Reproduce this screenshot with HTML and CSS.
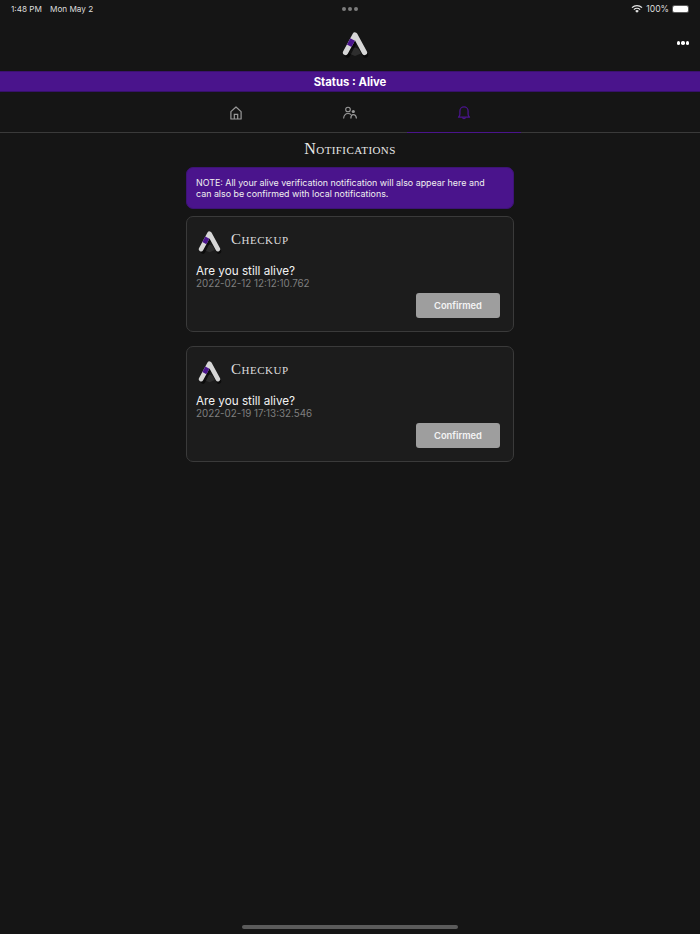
FILE: index.html
```html
<!DOCTYPE html>
<html lang="en">
<head>
<meta charset="utf-8">
<title>Notifications</title>
<link rel="stylesheet" href="styles.css">
</head>
<body>
<div class="page">
  <div class="statusbar">
    <div class="sb-left"><span>1:48 PM</span><span>Mon May 2</span></div>
    <div class="sb-dots"><i></i><i></i><i></i></div>
    <div class="sb-right">
      <svg class="wifi" width="12" height="9" viewBox="0 0 12 9"><path d="M6 8.8 4.2 6.900a2.600 2.600 0 0 1 3.600 0Z" fill="#e8e8e8"/><path d="M2.900 5.600a4.500 4.500 0 0 1 6.200 0" fill="none" stroke="#e8e8e8" stroke-width="1.300"/><path d="M1 3.600a7.200 7.200 0 0 1 10 0" fill="none" stroke="#e8e8e8" stroke-width="1.300"/></svg>
      <span>100%</span>
      <span class="battery"><span class="battery-fill"></span></span>
    </div>
  </div>
  <header class="topbar">
    <svg class="logo" width="30" height="26" viewBox="0 0 30 26"><use href="#logo-mark"/></svg>
    <div class="more"><i></i><i></i><i></i></div>
  </header>
  <div class="status">Status : Alive</div>
  <nav class="tabs">
    <div class="tab">
      <svg width="14" height="14" viewBox="0 0 14 14" fill="none" stroke="#9a9a9a" stroke-width="1.200"><path d="M1.900 13V5.600L7 1l5.100 4.600V13Z" stroke-linejoin="round"/><path d="M5.300 13V8.300h3.400V13"/></svg>
    </div>
    <div class="tab">
      <svg width="14" height="14" viewBox="0 0 14 14" fill="none" stroke="#9a9a9a" stroke-width="1.100"><circle cx="5" cy="3.500" r="2.300"/><path d="M.6 12.500c.3-3.300 2-5 4.400-5 1.300 0 2.300.4 3 1.200"/><circle cx="10.300" cy="5.500" r="1.600" fill="#9a9a9a" stroke="none"/><path d="M7.900 12.500c0-2.300 1-3.800 2.400-3.800s2.900 1.500 3.100 3.800" stroke-width="1.300"/></svg>
    </div>
    <div class="tab tab-active">
      <svg width="14" height="14" viewBox="0 0 14 14" fill="none" stroke="#4a148c" stroke-width="1.300"><path d="M1.500 11.200c.9-.9 1.400-1.500 1.400-3V5a4.100 4.100 0 0 1 8.200 0v3.200c0 1.500.5 2.100 1.400 3Z" stroke-linejoin="round"/><path d="M5.400 11.400a1.700 1.700 0 0 0 3.200 0"/></svg>
    </div>
  </nav>
  <main class="content">
    <h1 class="title">Notifications</h1>
    <div class="note">NOTE: All your alive verification notification will also appear here and can also be confirmed with local notifications.</div>
    <article class="card">
      <div class="card-head">
        <svg class="logo" width="27" height="23" viewBox="0 0 30 26"><use href="#logo-mark"/></svg>
        <span class="card-title">Checkup</span>
      </div>
      <div class="question">Are you still alive?</div>
      <div class="stamp">2022-02-12 12:12:10.762</div>
      <div class="actions"><button class="confirmed" type="button">Confirmed</button></div>
    </article>
    <article class="card">
      <div class="card-head">
        <svg class="logo" width="27" height="23" viewBox="0 0 30 26"><use href="#logo-mark"/></svg>
        <span class="card-title">Checkup</span>
      </div>
      <div class="question">Are you still alive?</div>
      <div class="stamp">2022-02-19 17:13:32.546</div>
      <div class="actions"><button class="confirmed" type="button">Confirmed</button></div>
    </article>
  </main>
  <div class="home-indicator"></div>
</div>
<svg class="defs" width="0" height="0" aria-hidden="true">
  <defs>
    <g id="logo-mark">
      <path d="M9 21.500C10.500 17.500 12.500 15.500 15 15.500s4.500 2 6 6l-6 2.500Z" fill="#2e2e2e"/>
      <path d="M6 21.500 15 4l9 17.500" fill="none" stroke="#000" stroke-opacity=".6" stroke-width="5.500" stroke-linecap="round" stroke-linejoin="round" transform="translate(1.500 1.500)"/>
      <path d="M5.500 20.500 15 3l9.500 17.500" fill="none" stroke="#d6d6d6" stroke-width="5.200" stroke-linecap="round" stroke-linejoin="round"/>
      <path d="M9.200 13.700 12.600 7.400" fill="none" stroke="#4a148c" stroke-width="5.200"/>
    </g>
  </defs>
</svg>
</body>
</html>
```
FILE: styles.css
```css
* { box-sizing: border-box; }
html, body { margin: 0; padding: 0; }
body {
  background: #151515;
  color: #fff;
  font-family: Inter, "Liberation Sans", sans-serif;
}
.page {
  width: 700px;
  height: 934px;
  display: flex;
  flex-direction: column;
  overflow: hidden;
}
.statusbar {
  height: 18px;
  padding: 0 11px 1px 11px;
  display: grid;
  grid-template-columns: 1fr auto 1fr;
  align-items: center;
  font-size: 8.200px;
  color: #dcdcdc;
}
.sb-left { display: flex; gap: 8px; }
.sb-dots { display: flex; gap: 2px; }
.sb-dots i { width: 4px; height: 4px; border-radius: 50%; background: #7d7d7d; }
.sb-right { display: flex; justify-content: flex-end; align-items: center; gap: 3px; }
.sb-right span:first-of-type { font-size: 8.600px; }
.battery {
  width: 17px;
  height: 8px;
  padding: 1px;
  border-radius: 2.500px;
  background: #5a5a5a;
}
.battery-fill { display: block; height: 100%; background: #fff; border-radius: 1.500px; }
.topbar {
  height: 53px;
  position: relative;
  display: flex;
  justify-content: center;
  align-items: center;
  padding: 0 0 0 10px;
}
.logo { display: block; }
.more {
  position: absolute;
  right: 11px;
  top: 23px;
  display: flex;
  gap: 1px;
}
.more i { width: 3.500px; height: 3.500px; border-radius: 50%; background: #fff; }
.status {
  height: 21px;
  background: #4a148c;
  border-top: 1px solid #3b1170;
  border-bottom: 1px solid #36106a;
  font-size: 11.300px;
  font-weight: 700;
  line-height: 20px;
  text-align: center;
}
.tabs {
  height: 41px;
  display: flex;
  justify-content: center;
  border-bottom: 1px solid #3a3a3a;
}
.tab {
  width: 114px;
  height: 41px;
  display: flex;
  justify-content: center;
  padding-top: 14px;
}
.tab-active { border-bottom: 1px solid #4a148c; }
.content {
  width: 328px;
  margin: 0 auto;
  display: flex;
  flex-direction: column;
}
.title {
  margin: 7px 0 10px;
  height: 17px;
  font-family: "Liberation Serif", serif;
  font-variant: small-caps;
  font-weight: 400;
  font-size: 16px;
  line-height: 17px;
  letter-spacing: .4px;
  text-align: center;
  color: #e8e8e8;
}
.note {
  height: 42px;
  padding: 9px 18px 0 9px;
  background: #4a148c;
  border-radius: 7px;
  border: 1px solid #3d1375;
  font-size: 8.900px;
  line-height: 11px;
  color: #f0f0f0;
  margin-bottom: 7px;
}
.card {
  height: 116px;
  padding: 13px 13px 0 9px;
  background: #1c1c1c;
  border: 1px solid #3a3a3a;
  border-radius: 7px;
  margin-bottom: 14px;
}
.card-head { display: flex; align-items: center; gap: 8px; height: 24px; margin-bottom: 11px; }
.card-title {
  font-family: "Liberation Serif", serif;
  font-variant: small-caps;
  font-size: 15px;
  line-height: 17px;
  letter-spacing: .5px;
  color: #dcdcdc;
  margin-bottom: 5px;
}
.question { font-size: 11.700px; line-height: 12px; color: #f2f2f2; }
.stamp { font-size: 9.800px; line-height: 13px; color: #7f7f7f; }
.actions { display: flex; justify-content: flex-end; margin-top: 3px; }
.confirmed {
  width: 84px;
  height: 25px;
  padding: 0;
  border: 0;
  border-radius: 3px;
  background: #9e9e9e;
  color: #f4f4f4;
  font-family: inherit;
  font-size: 9.300px;
  font-weight: 600;
}
.home-indicator {
  width: 216px;
  height: 4px;
  margin: auto auto 5px;
  border-radius: 2px;
  background: #5b5b5b;
}
.defs { position: absolute; }
```
